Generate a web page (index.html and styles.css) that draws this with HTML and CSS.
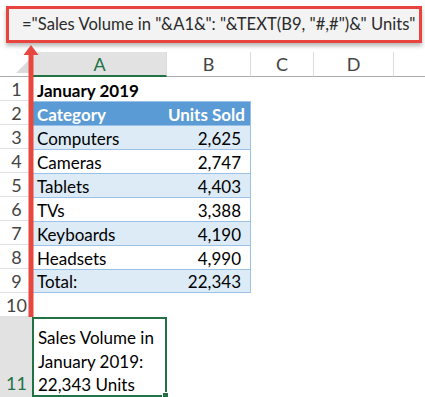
FILE: index.html
```html
<!DOCTYPE html>
<html>
<head>
<meta charset="utf-8">
<link rel="stylesheet" href="styles.css">
</head>
<body>
<div class="page">
  <div class="formula">="Sales Volume in "&amp;A1&amp;": "&amp;TEXT(B9, "#,#")&amp;" Units"</div>
  <div class="sheet">
    <div class="corner"><span class="tri"></span></div>
    <div class="colhead sel">A</div>
    <div class="colhead">B</div>
    <div class="colhead">C</div>
    <div class="colhead">D</div>
    <div class="colhead last"></div>

    <div class="rowhead">1</div>
    <div class="cell bold">January 2019</div>
    <div class="cell"></div><div class="cell"></div><div class="cell"></div><div class="cell"></div>

    <div class="rowhead">2</div>
    <div class="cell th">Category</div>
    <div class="cell th num head-r">Units Sold</div>
    <div class="cell"></div><div class="cell"></div><div class="cell"></div>

    <div class="rowhead">3</div>
    <div class="cell band">Computers</div>
    <div class="cell band num tr">2,625</div>
    <div class="cell"></div><div class="cell"></div><div class="cell"></div>

    <div class="rowhead">4</div>
    <div class="cell plain">Cameras</div>
    <div class="cell plain num tr">2,747</div>
    <div class="cell"></div><div class="cell"></div><div class="cell"></div>

    <div class="rowhead">5</div>
    <div class="cell band">Tablets</div>
    <div class="cell band num tr">4,403</div>
    <div class="cell"></div><div class="cell"></div><div class="cell"></div>

    <div class="rowhead">6</div>
    <div class="cell plain">TVs</div>
    <div class="cell plain num tr">3,388</div>
    <div class="cell"></div><div class="cell"></div><div class="cell"></div>

    <div class="rowhead">7</div>
    <div class="cell band">Keyboards</div>
    <div class="cell band num tr">4,190</div>
    <div class="cell"></div><div class="cell"></div><div class="cell"></div>

    <div class="rowhead">8</div>
    <div class="cell plain">Headsets</div>
    <div class="cell plain num tr">4,990</div>
    <div class="cell"></div><div class="cell"></div><div class="cell"></div>

    <div class="rowhead">9</div>
    <div class="cell band tb">Total:</div>
    <div class="cell band num tr tb">22,343</div>
    <div class="cell"></div><div class="cell"></div><div class="cell"></div>

    <div class="rowhead">10</div>
    <div class="cell"></div><div class="cell"></div><div class="cell"></div><div class="cell"></div><div class="cell"></div>

    <div class="rowhead tall sel">11</div>
    <div class="cell active">Sales Volume in<br>January 2019:<br>22,343 Units<span class="handle"></span></div>
    <div class="cell"></div><div class="cell"></div><div class="cell"></div><div class="cell"></div>
  </div>

  <svg class="arrow" width="20" height="280" viewBox="0 0 20 280">
    <polygon points="10,0 2.5,10 17.5,10" fill="#e8473f"/>
    <rect x="7.5" y="9" width="5" height="263" fill="#e8473f"/>
  </svg>
</div>
</body>
</html>
```

FILE: styles.css
```css
html, body {
  margin: 0;
  padding: 0;
  background: #ffffff;
}

.page {
  position: relative;
  width: 425px;
  height: 397px;
  overflow: hidden;
  font-family: Lato, "Liberation Sans", Arial, sans-serif;
  color: #000;
}

/* formula bar with a red outline */
.formula {
  margin: 6px 3px 0 6px;
  height: 31px;
  line-height: 31px;
  border: 3px solid #e8433c;
  background: #f3f3f3;
  box-shadow: 0 3px 4px rgba(0, 0, 0, 0.28);
  padding-left: 13px;
  font-size: 16.6px;
  color: #2b2b2b;
  white-space: nowrap;
  overflow: hidden;
}

/* worksheet grid */
.sheet {
  margin-top: 9px;
  display: grid;
  grid-template-columns: 33px 134px 84px 63px 80px 1fr;
  grid-template-rows: 25px repeat(10, 24px) 80px;
  font-size: 17px;
}

.corner {
  position: relative;
  background: #fff;
  border-bottom: 1px solid #ababab;
}
.corner .tri {
  position: absolute;
  right: 3px;
  bottom: 3px;
  width: 0;
  height: 0;
  border-left: 14px solid transparent;
  border-bottom: 14px solid #dadada;
}

.colhead {
  display: flex;
  align-items: center;
  justify-content: center;
  border-bottom: 1px solid #ababab;
  border-right: 1px solid #dcdcdc;
  color: #444;
  font-size: 18px;
}
.colhead.sel {
  background: #e2e2e2;
  color: #217346;
  border-bottom: 2px solid #217346;
}
.colhead.last {
  border-right: none;
}

.rowhead {
  display: flex;
  align-items: flex-end;
  justify-content: center;
  padding-bottom: 0;
  border-bottom: 1px solid #e1e1e1;
  color: #444;
  font-size: 18px;
  line-height: 21px;
  box-sizing: border-box;
}
.rowhead.tall {
  padding-bottom: 3px;
}
.rowhead.sel {
  background: #e2e2e2;
  color: #217346;
  border-bottom: none;
}

.cell {
  display: flex;
  align-items: flex-end;
  padding: 0 4px 0;
  white-space: nowrap;
  line-height: 21px;
  box-sizing: border-box;
}
.cell.bold {
  font-weight: bold;
}
.cell.th {
  background: #5b9bd5;
  color: #fff;
  font-weight: bold;
  border-top: 1px solid #9bc2e6;
}
.cell.band {
  background: #ddebf7;
  border-top: 1px solid #9bc2e6;
}
.cell.plain {
  border-top: 1px solid #9bc2e6;
}
.cell.num {
  justify-content: flex-end;
  padding-right: 9px;
}
.cell.head-r {
  padding-right: 5px;
  border-right: 1px solid #9bc2e6;
}
.cell.tr {
  border-right: 1px solid #9bc2e6;
}
.cell.tb {
  border-bottom: 1px solid #9bc2e6;
}

/* selected cell with wrapped text */
.cell.active {
  position: relative;
  display: block;
  align-self: stretch;
  margin-left: -1px;
  border: 2px solid #217346;
  padding: 7px 4px 0 4px;
  line-height: 23.5px;
  white-space: normal;
}
.handle {
  position: absolute;
  right: -4px;
  bottom: -4px;
  width: 5px;
  height: 5px;
  background: #217346;
  border: 1px solid #fff;
}

.arrow {
  position: absolute;
  left: 21px;
  top: 45px;
}
```
